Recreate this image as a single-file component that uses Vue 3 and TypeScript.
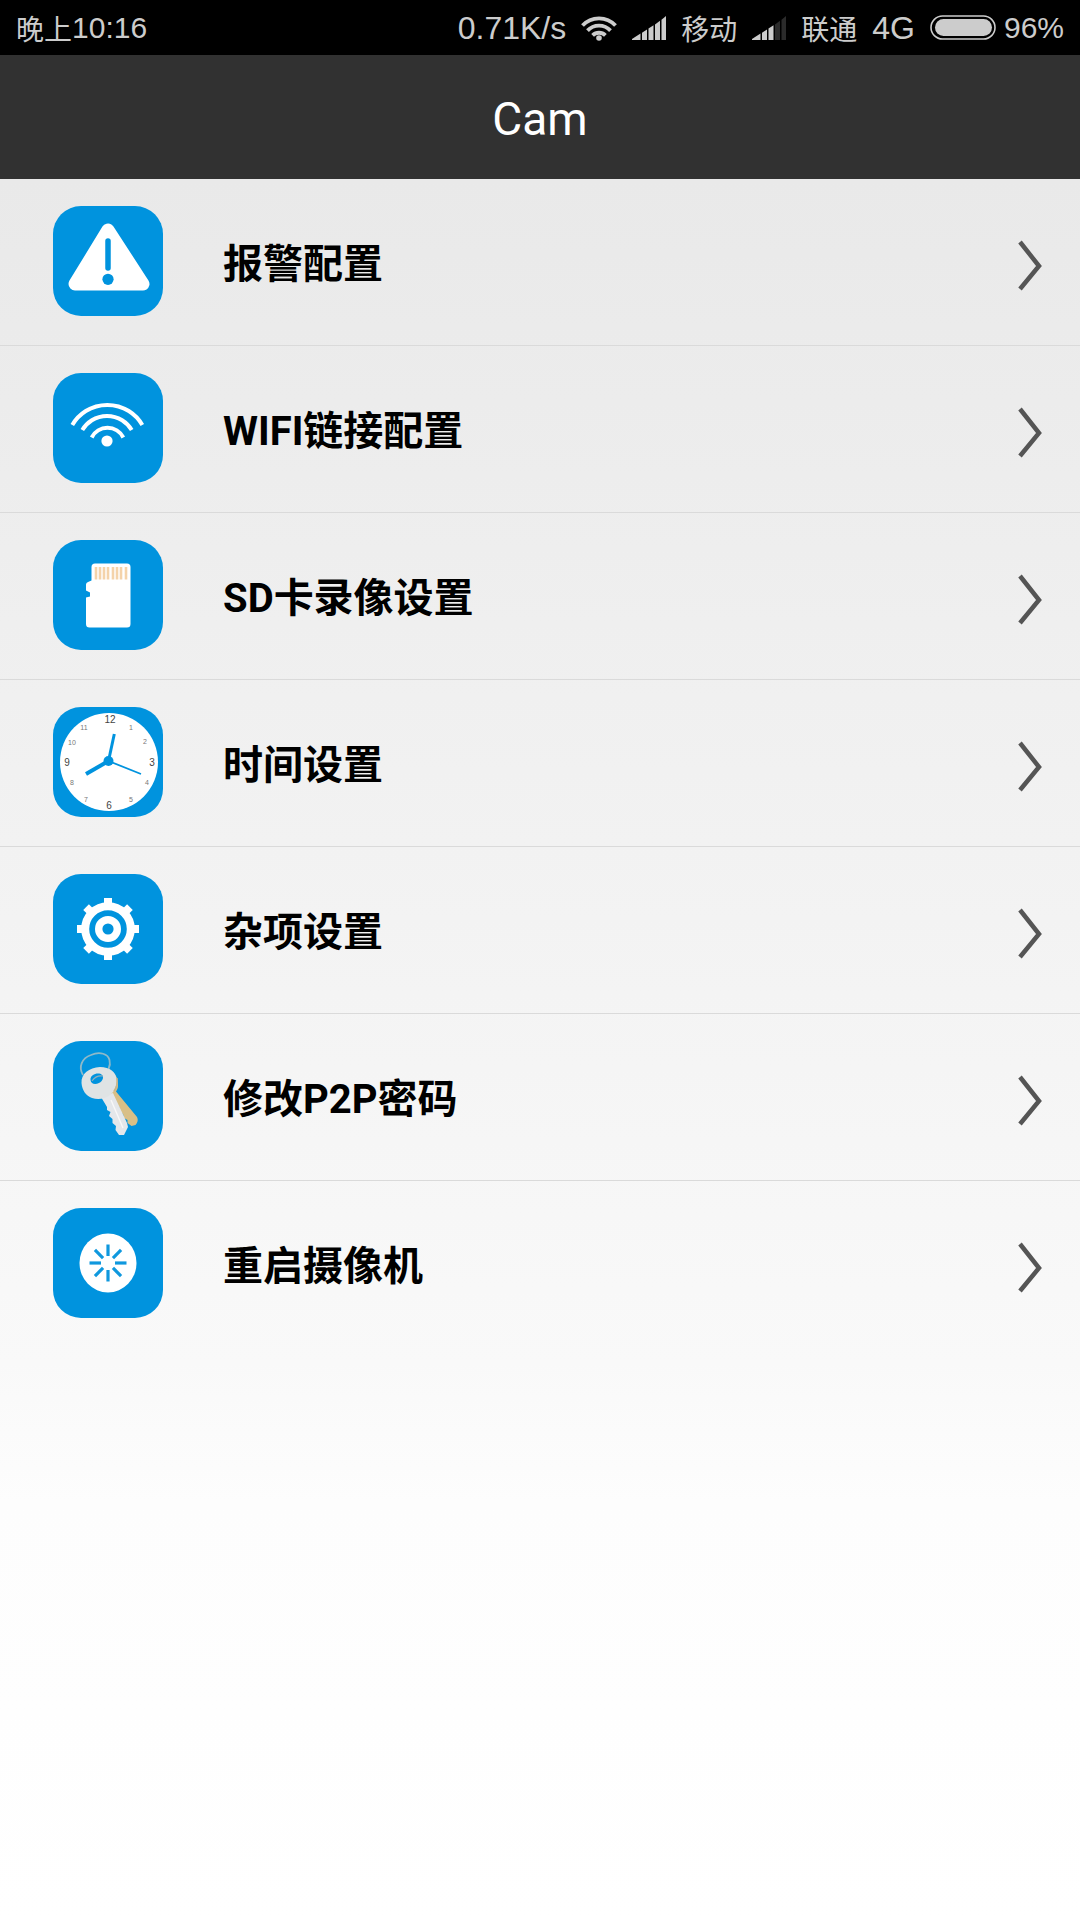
<script setup lang="ts">
type IconName = 'alarm' | 'wifi' | 'card' | 'clock' | 'gear' | 'keys' | 'restart'

interface MenuItem {
  icon: IconName
  label: string
}

interface Numeral {
  text: string
  x: number
  y: number
  major?: boolean
}

const items: MenuItem[] = [
  { icon: 'alarm', label: '报警配置' },
  { icon: 'wifi', label: 'WIFI链接配置' },
  { icon: 'card', label: 'SD卡录像设置' },
  { icon: 'clock', label: '时间设置' },
  { icon: 'gear', label: '杂项设置' },
  { icon: 'keys', label: '修改P2P密码' },
  { icon: 'restart', label: '重启摄像机' },
]

const numerals: Numeral[] = [
  { text: '12', x: 57, y: 16, major: true },
  { text: '1', x: 78, y: 23 },
  { text: '2', x: 92, y: 37 },
  { text: '3', x: 99, y: 59, major: true },
  { text: '4', x: 94, y: 78 },
  { text: '5', x: 78, y: 95 },
  { text: '6', x: 56, y: 102, major: true },
  { text: '7', x: 33, y: 95 },
  { text: '8', x: 19, y: 78 },
  { text: '9', x: 14, y: 59, major: true },
  { text: '10', x: 19, y: 38 },
  { text: '11', x: 31, y: 23 },
]

const pins: number[] = [43, 47, 51, 55, 60, 64, 68, 73]
const teeth: number[] = [0, 45, 90, 135, 180, 225, 270, 315]
</script>

<template>
  <div class="screen">
    <header>
      <div class="status">
        <span class="time"><span class="cjk">晚上</span>10:16</span>
        <div class="indicators">
          <span class="latin">0.71K/s</span>
          <svg class="wifi" viewBox="0 0 36 28" aria-hidden="true">
            <g fill="none" stroke="#ccc" stroke-width="3.8">
              <path d="M1.500 11.5A22.5 22.5 0 0 1 34.500 11.5" />
              <path d="M6.5 16.6A15.7 15.7 0 0 1 29.5 16.6" />
              <path d="M11.6 21.4A9 9 0 0 1 24.4 21.4" />
            </g>
            <circle cx="18" cy="24" r="2.8" fill="#ccc" />
          </svg>
          <svg class="signal" viewBox="0 0 34 24" aria-hidden="true">
            <g fill="#ccc">
              <path d="M0 24V23L8.500 17.500V24Z" />
              <path d="M10 24V16.8L15 13.500V24Z" />
              <path d="M16.5 24V12.6L21.500 9.2V24Z" />
              <path d="M23 24V8.4L28 4.8V24Z" />
              <path d="M29.5 24V3.8L34 0V24Z" />
            </g>
          </svg>
          <span class="cjk">移动</span>
          <svg class="signal" viewBox="0 0 34 24" aria-hidden="true">
            <g fill="#ccc">
              <path d="M0 24V23L8.500 17.500V24Z" />
              <path d="M10 24V16.8L15 13.500V24Z" />
              <path d="M16.5 24V12.6L21.500 9.2V24Z" />
            </g>
            <g fill="#2b2b2b">
              <path d="M23 24V8.4L28 4.8V24Z" />
              <path d="M29.5 24V3.8L34 0V24Z" />
            </g>
          </svg>
          <span class="cjk">联通</span>
          <span class="latin">4G</span>
          <span class="power">
            <svg class="battery" viewBox="0 0 66 25" aria-hidden="true">
              <rect x="1" y="1" width="64" height="23" rx="11.5" fill="none" stroke="#ccc" stroke-width="1.6" />
              <rect x="5" y="4" width="57" height="17" rx="8.5" fill="#ccc" />
            </svg>
            <span>96%</span>
          </span>
        </div>
      </div>
      <h1>Cam</h1>
    </header>

    <main>
      <ul class="menu">
        <li v-for="item in items" :key="item.icon">
          <button type="button" class="row">
            <svg class="icon" viewBox="0 0 110 110" aria-hidden="true">
              <rect width="110" height="110" rx="28" fill="#0093de" />

              <g v-if="item.icon === 'alarm'">
                <path d="M55 24L90 78H22Z" fill="#fff" stroke="#fff" stroke-width="13" stroke-linejoin="round" />
                <path d="M55 35V62" stroke="#0093de" stroke-width="5.5" stroke-linecap="round" />
                <circle cx="55" cy="73.3" r="5.6" fill="#0093de" />
              </g>

              <g v-else-if="item.icon === 'wifi'" fill="none" stroke="#fff" stroke-width="4">
                <path d="M19.3 52A40.5 40.5 0 0 1 89.3 52" />
                <path d="M29.3 57A28.7 28.7 0 0 1 78.7 57" />
                <path d="M38.7 64.5A17.7 17.7 0 0 1 70.3 64.5" />
                <circle cx="54" cy="68" r="5.6" fill="#fff" stroke="none" />
              </g>

              <g v-else-if="item.icon === 'card'">
                <path
                  d="M42 23.5H74Q77.5 23.5 77.5 27V84Q77.5 87.5 74 87.5H36.5Q33 87.5 33 84V57.5L37 56.5V52.5L33 50.5V44.5Q33 42.5 35 42L38.5 40.5V27Q38.5 23.5 42 23.5Z"
                  fill="#fff"
                />
                <path v-for="x in pins" :key="x" :d="`M${x} 27V39.5`" stroke="#f4d3aa" stroke-width="2.6" />
              </g>

              <g v-else-if="item.icon === 'clock'">
                <circle cx="56" cy="55" r="49" fill="#fff" />
                <text
                  v-for="n in numerals"
                  :key="n.text"
                  :x="n.x"
                  :y="n.y"
                  :class="['numeral', { major: n.major }]"
                >{{ n.text }}</text>
                <g stroke="#0093de" fill="none">
                  <path d="M55.5 54L61.3 27" stroke-width="3" />
                  <path d="M55.5 54L33 67" stroke-width="4" />
                  <path d="M55.5 54L88 67" stroke-width="1.8" />
                </g>
                <circle cx="55.5" cy="54" r="5" fill="#0093de" />
              </g>

              <g v-else-if="item.icon === 'gear'">
                <circle cx="55" cy="55" r="22.8" fill="none" stroke="#fff" stroke-width="8" />
                <path
                  v-for="a in teeth"
                  :key="a"
                  d="M51 32V24H59V32Z"
                  :transform="`rotate(${a} 55 55)`"
                  fill="#fff"
                />
                <circle cx="55" cy="55" r="9.3" fill="none" stroke="#fff" stroke-width="7.4" />
              </g>

              <g v-else-if="item.icon === 'keys'">
                <path
                  d="M30 34C25 26 29 17 38 14C47 10 55 13 56.5 19C57.3 22 57 25 55.5 28"
                  fill="none"
                  stroke="#8fb9c8"
                  stroke-width="1.8"
                />
                <path
                  d="M50 27C60 28 66 36 65 45C65 47 64 49 63 50.5L84 76Q86 80 82.5 84L78.5 85L74.5 82V79L71 77L70 73L67 71V67L63.5 64L56 55Z"
                  fill="#d8bf86"
                />
                <path
                  d="M48 56L60 52L74 82L75 86L71 94H66L62.5 89L63 85L59.5 82V78L56 75L57.5 71L54 69V66Z"
                  fill="#e4e7ea"
                />
                <path d="M58 59L70 87" stroke="#f8f8f8" stroke-width="1.4" />
                <path
                  fill-rule="evenodd"
                  d="M28.5 42C28 33 36 26.5 47 26C57 26 63 31 63.5 38C64 44 62 50 57 54C52 58 45 59 39 57C33 55 29 49 28.5 42ZM37.5 39C38 43 42 44 46 42C50 40 51 36 49 34C46 31 37 33 37.5 39Z"
                  fill="#dfe3e4"
                />
                <path d="M39 40Q43 34 50 35" fill="none" stroke="#93aebb" stroke-width="1.2" />
                <path d="M61 50Q65 45 64 37" fill="none" stroke="#c3b48e" stroke-width="1.5" />
              </g>

              <g v-else>
                <ellipse cx="55" cy="55" rx="28.5" ry="29.5" fill="#fff" />
                <path
                  v-for="a in teeth"
                  :key="a"
                  d="M55 36.5V48"
                  :transform="`rotate(${a} 55 55)`"
                  stroke="#0f98de"
                  stroke-width="3.2"
                />
              </g>
            </svg>
            <span class="label">{{ item.label }}</span>
            <svg class="chevron" viewBox="0 0 24 52" aria-hidden="true">
              <path d="M2 3L21 27L2 50" fill="none" stroke="#555" stroke-width="4.5" />
            </svg>
          </button>
        </li>
      </ul>
    </main>
  </div>
</template>

<style>
body {
  margin: 0;
}
</style>

<style scoped>
.screen {
  display: flex;
  flex-direction: column;
  min-height: 100vh;
  font-family: Roboto, "Noto Sans CJK SC", sans-serif;
}

.status {
  display: flex;
  align-items: center;
  justify-content: space-between;
  height: 55px;
  padding: 0 16px;
  background: #000;
  color: #ccc;
  font-family: "Liberation Sans", "Noto Sans CJK SC", sans-serif;
  font-size: 30px;
  line-height: 40px;
  white-space: nowrap;
}

.time {
  display: flex;
  align-items: center;
}

.indicators {
  display: flex;
  align-items: center;
  gap: 15px;
}

.cjk {
  font-family: "Noto Sans CJK SC", sans-serif;
  font-size: 28px;
}

.latin {
  font-size: 32px;
}

.wifi {
  width: 36px;
  height: 28px;
}

.signal {
  width: 34px;
  height: 24px;
}

.power {
  display: flex;
  align-items: center;
  gap: 8px;
}

.battery {
  width: 66px;
  height: 25px;
}

h1 {
  margin: 0;
  padding-top: 4px;
  background: #313131;
  color: #fff;
  font-size: 46px;
  font-weight: 400;
  line-height: 120px;
  text-align: center;
}

main {
  flex: 1;
  background: linear-gradient(#e9e9e9, #f9f9f9 68%, #fdfdfd 76%, #fff);
}

.menu {
  margin: 0;
  padding: 0;
  list-style: none;
}

.menu li + li {
  border-top: 1px solid #dadada;
}

.row {
  display: flex;
  align-items: center;
  box-sizing: border-box;
  width: 100%;
  height: 166px;
  padding: 6px 38px 0 53px;
  border: 0;
  background: none;
  color: #000;
  font: inherit;
  text-align: left;
}

.icon {
  flex: none;
  width: 110px;
  height: 110px;
  margin: 0 60px 8px 0;
}

.label {
  flex: 1;
  font-size: 40px;
  font-weight: 700;
  line-height: 60px;
}

.chevron {
  flex: none;
  width: 24px;
  height: 52px;
}

.numeral {
  fill: #777;
  font-family: "Liberation Sans", sans-serif;
  font-size: 7px;
  text-anchor: middle;
}

.numeral.major {
  fill: #444;
  font-size: 10px;
}
</style>
